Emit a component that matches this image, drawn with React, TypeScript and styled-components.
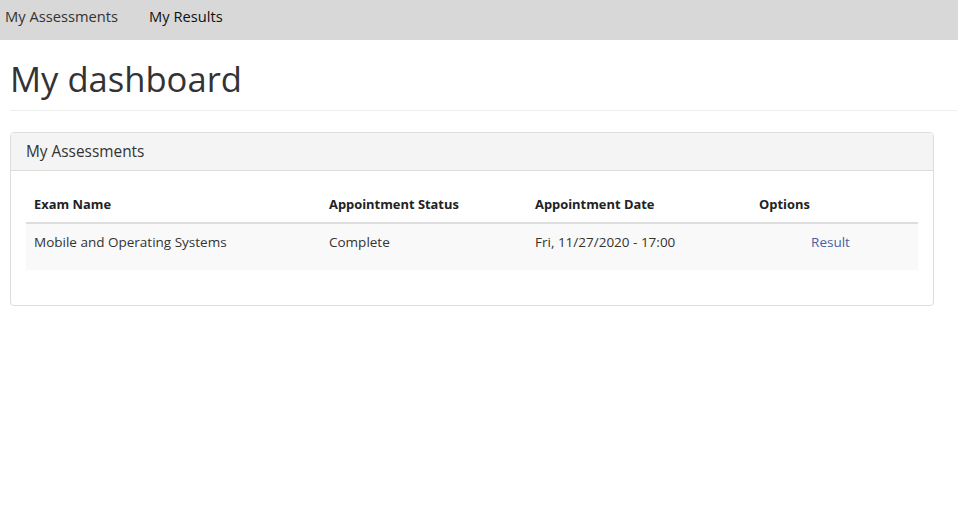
import React from 'react';
import styled, { createGlobalStyle } from 'styled-components';

const GlobalStyle = createGlobalStyle`
  body {
    margin: 0;
    background: #ffffff;
    font-family: "Open Sans", "Noto Sans", sans-serif;
    color: #333333;
  }
`;

const StyledNav = styled.nav`
  background: #d8d8d8;
  height: 40px;
  display: flex;
  align-items: center;
  padding: 0 5px;
  gap: 31px;
`;

const NavLink = styled.a<{ active?: boolean }>`
  font-size: 14.7px;
  color: ${(p) => (p.active ? '#111111' : '#333333')};
  text-decoration: none;
  padding-bottom: 8px;
`;

const Main = styled.main`
  padding: 0 1px 0 10px;
`;

const PageHeader = styled.div`
  border-bottom: 1px solid #eeeeee;
  margin-bottom: 21px;
`;

const Title = styled.h1`
  font-size: 34.6px;
  font-weight: 400;
  line-height: 38px;
  margin: 0;
  padding: 20px 0 12px;
  color: #333333;
`;

const Panel = styled.section`
  margin-right: 23px;
  border: 1px solid #dddddd;
  border-radius: 4px;
  overflow: hidden;
`;

const PanelHeading = styled.div`
  background: #f4f4f4;
  border-bottom: 1px solid #dddddd;
  padding: 9px 15px;
  font-size: 15.4px;
  line-height: 19px;
  color: #333333;
`;

const PanelBody = styled.div`
  padding: 15px 15px 35px;
`;

const Table = styled.table`
  width: 100%;
  border-collapse: collapse;
  table-layout: fixed;
  font-size: 13.5px;
  line-height: 20px;
`;

const Th = styled.th<{ w: number }>`
  box-sizing: border-box;
  width: ${(p) => p.w}px;
  text-align: left;
  font-weight: 700;
  font-size: 12.9px;
  padding: 8px;
  border-bottom: 2px solid #dddddd;
  color: #222222;
`;

const Row = styled.tr`
  background: #f9f9f9;
`;

const Td = styled.td<{ center?: boolean }>`
  padding: ${(p) => (p.center ? '8px 16px 18px 8px' : '8px 8px 18px')};
  vertical-align: top;
  text-align: ${(p) => (p.center ? 'center' : 'left')};
  color: #333333;
`;

const ResultLink = styled.a`
  color: #4a5f9c;
  text-decoration: none;
`;

export default function App() {
  return (
    <>
      <GlobalStyle />
      <StyledNav>
        <NavLink>My Assessments</NavLink>
        <NavLink active>My Results</NavLink>
      </StyledNav>
      <Main>
        <PageHeader>
          <Title>My dashboard</Title>
        </PageHeader>
        <Panel>
          <PanelHeading>My Assessments</PanelHeading>
          <PanelBody>
            <Table>
              <thead>
                <tr>
                  <Th w={295}>Exam Name</Th>
                  <Th w={206}>Appointment Status</Th>
                  <Th w={224}>Appointment Date</Th>
                  <Th w={167}>Options</Th>
                </tr>
              </thead>
              <tbody>
                <Row>
                  <Td>Mobile and Operating Systems</Td>
                  <Td>Complete</Td>
                  <Td>Fri, 11/27/2020 - 17:00</Td>
                  <Td center>
                    <ResultLink>Result</ResultLink>
                  </Td>
                </Row>
              </tbody>
            </Table>
          </PanelBody>
        </Panel>
      </Main>
    </>
  );
}
